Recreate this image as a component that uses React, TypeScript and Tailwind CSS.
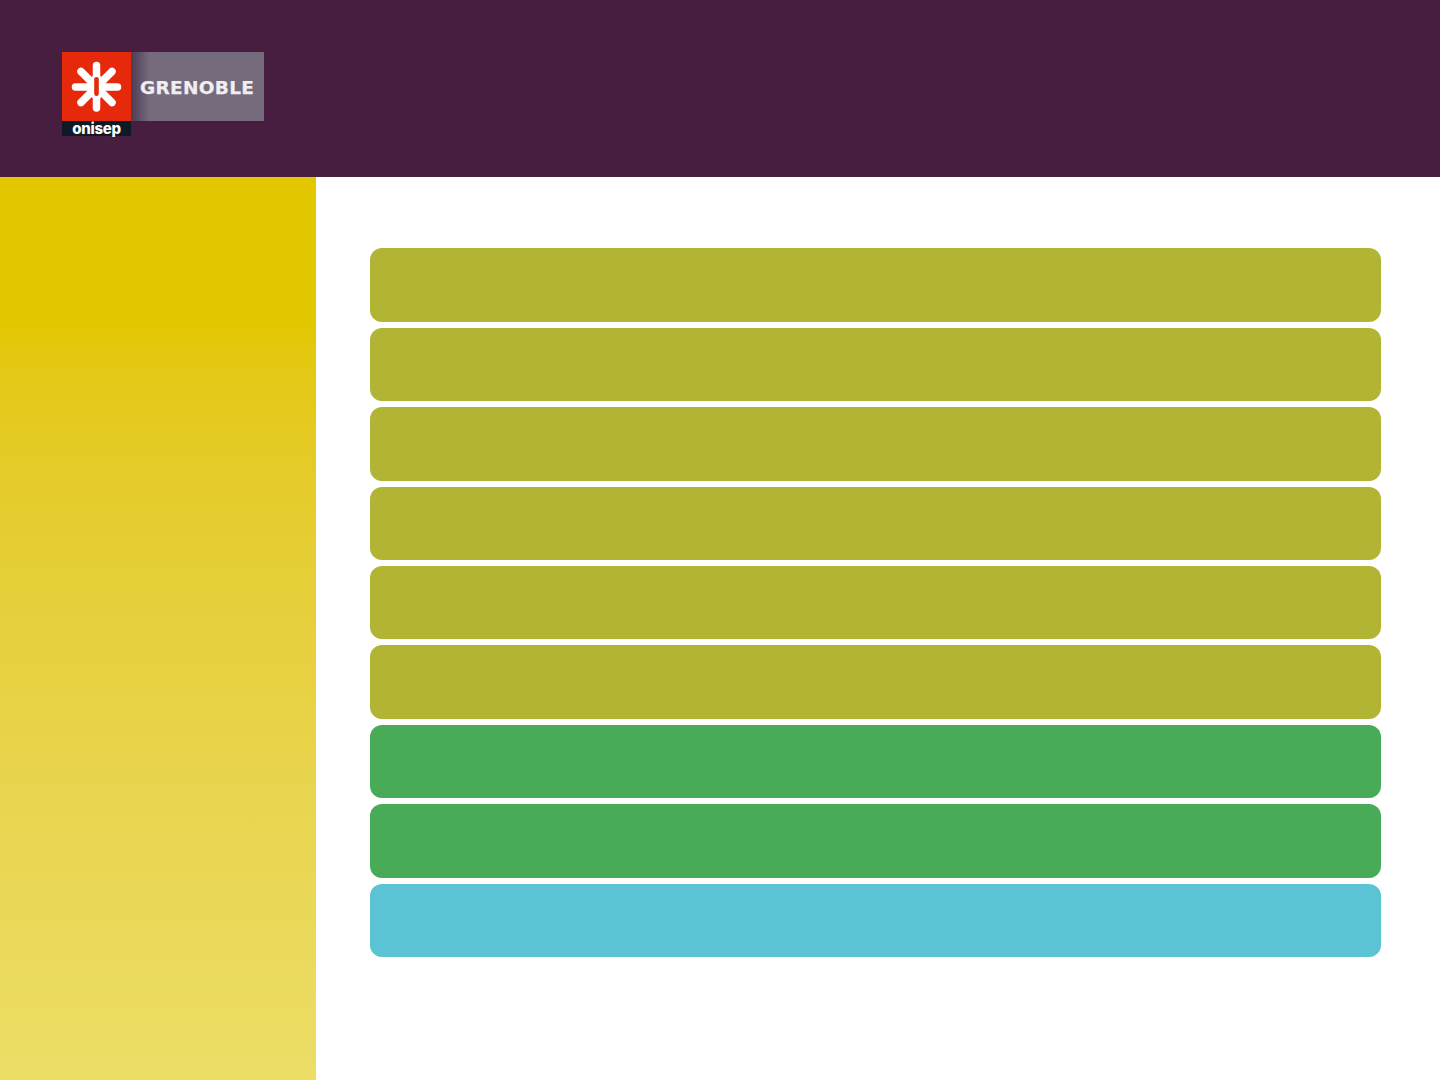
export default function App() {
  const bars = [
    "bg-[#b2b434]",
    "bg-[#b2b434]",
    "bg-[#b2b434]",
    "bg-[#b2b434]",
    "bg-[#b2b434]",
    "bg-[#b2b434]",
    "bg-[#49ab58]",
    "bg-[#49ab58]",
    "bg-[#5ac4d5]",
  ];

  return (
    <div className="w-[1440px] h-[1080px] flex flex-col bg-white overflow-hidden">
      <header className="h-[177px] shrink-0 bg-[#481e40] pl-[62px] pt-[52px]">
        <div className="flex items-start">
          <div className="w-[69px] flex flex-col">
            <div className="h-[69px] bg-[#e5290a] flex items-center justify-center">
              <svg width="69" height="69" viewBox="0 0 69 69">
                <g stroke="#fff" strokeWidth="7.5" strokeLinecap="round">
                  <line x1="34.5" y1="13.5" x2="34.5" y2="56" />
                  <line x1="13.5" y1="35" x2="55.5" y2="35" />
                  <line x1="19" y1="19.5" x2="50" y2="50.5" />
                  <line x1="50" y1="19.5" x2="19" y2="50.5" />
                </g>
                <ellipse cx="34.5" cy="35" rx="7.5" ry="13" fill="#fff" />
                <rect x="32.2" y="25" width="4.6" height="19" rx="2.3" fill="#e5290a" />
              </svg>
            </div>
            <div className="h-[15px] bg-[#0e1a26] flex items-center justify-center text-white font-extrabold text-[15px] leading-none tracking-[-0.3px] font-['Inter',sans-serif]">
              onisep
            </div>
          </div>
          <div className="w-[133px] h-[69px] flex items-center pl-[9px] pt-[3px] bg-gradient-to-r from-[#4f3c53] via-[#756b7d] via-[14%] to-[#756b7d]">
            <span className="text-[#f0eef0] font-bold text-[18.5px] leading-none tracking-[0.3px] [-webkit-text-stroke:0.25px_#f0eef0] font-['DejaVu_Sans',sans-serif]">
              GRENOBLE
            </span>
          </div>
        </div>
      </header>
      <div className="flex flex-1">
        <aside className="w-[316px] shrink-0 bg-gradient-to-b from-[#e3c700] from-[16%] to-[#ecdd66]" />
        <main className="flex-1 pl-[54px] pr-[59px] pt-[71.4px]">
          <div className="flex flex-col gap-[5.9px]">
            {bars.map((color, index) => (
              <div key={index} className={`h-[73.5px] rounded-[12px] ${color}`} />
            ))}
          </div>
        </main>
      </div>
    </div>
  );
}
